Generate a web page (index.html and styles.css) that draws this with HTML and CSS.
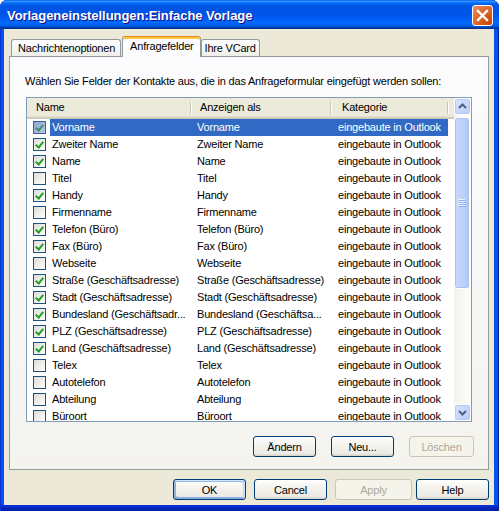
FILE: index.html
```html
<!DOCTYPE html>
<html lang="de">
<head>
<meta charset="utf-8">
<title>Vorlageneinstellungen</title>
<link rel="stylesheet" href="styles.css">
</head>
<body>
<div class="window">
  <div class="titlebar">
    <span class="title">Vorlageneinstellungen:Einfache Vorlage</span>
    <span class="close">
      <svg width="21" height="21" viewBox="0 0 21 21"><path d="M6 6 L15 15 M15 6 L6 15" stroke="#fff" stroke-width="2.4" stroke-linecap="square"/></svg>
    </span>
  </div>
  <div class="client">
    <div class="tabs">
      <div class="tab">Nachrichtenoptionen</div>
      <div class="tab active">Anfragefelder</div>
      <div class="tab">Ihre VCard</div>
    </div>
    <div class="panel">
      <div class="label">Wählen Sie Felder der Kontakte aus, die in das Anfrageformular eingefügt werden sollen:</div>
      <div class="list">
        <div class="list-main">
          <div class="header">
            <div class="hcell c1">Name</div>
            <div class="hcell c2">Anzeigen als</div>
            <div class="hcell c3">Kategorie</div>
          </div>
          <div class="rows">
            <div class="row selected"><div class="cell c1"><span class="cb on"></span><span class="txt">Vorname</span></div><div class="cell c2">Vorname</div><div class="cell c3">eingebaute in Outlook</div></div>
            <div class="row"><div class="cell c1"><span class="cb on"></span><span class="txt">Zweiter Name</span></div><div class="cell c2">Zweiter Name</div><div class="cell c3">eingebaute in Outlook</div></div>
            <div class="row"><div class="cell c1"><span class="cb on"></span><span class="txt">Name</span></div><div class="cell c2">Name</div><div class="cell c3">eingebaute in Outlook</div></div>
            <div class="row"><div class="cell c1"><span class="cb"></span><span class="txt">Titel</span></div><div class="cell c2">Titel</div><div class="cell c3">eingebaute in Outlook</div></div>
            <div class="row"><div class="cell c1"><span class="cb on"></span><span class="txt">Handy</span></div><div class="cell c2">Handy</div><div class="cell c3">eingebaute in Outlook</div></div>
            <div class="row"><div class="cell c1"><span class="cb"></span><span class="txt">Firmenname</span></div><div class="cell c2">Firmenname</div><div class="cell c3">eingebaute in Outlook</div></div>
            <div class="row"><div class="cell c1"><span class="cb on"></span><span class="txt">Telefon (Büro)</span></div><div class="cell c2">Telefon (Büro)</div><div class="cell c3">eingebaute in Outlook</div></div>
            <div class="row"><div class="cell c1"><span class="cb on"></span><span class="txt">Fax (Büro)</span></div><div class="cell c2">Fax (Büro)</div><div class="cell c3">eingebaute in Outlook</div></div>
            <div class="row"><div class="cell c1"><span class="cb"></span><span class="txt">Webseite</span></div><div class="cell c2">Webseite</div><div class="cell c3">eingebaute in Outlook</div></div>
            <div class="row"><div class="cell c1"><span class="cb on"></span><span class="txt">Straße (Geschäftsadresse)</span></div><div class="cell c2">Straße (Geschäftsadresse)</div><div class="cell c3">eingebaute in Outlook</div></div>
            <div class="row"><div class="cell c1"><span class="cb on"></span><span class="txt">Stadt (Geschäftsadresse)</span></div><div class="cell c2">Stadt (Geschäftsadresse)</div><div class="cell c3">eingebaute in Outlook</div></div>
            <div class="row"><div class="cell c1"><span class="cb on"></span><span class="txt">Bundesland (Geschäftsadr...</span></div><div class="cell c2">Bundesland (Geschäftsa...</div><div class="cell c3">eingebaute in Outlook</div></div>
            <div class="row"><div class="cell c1"><span class="cb on"></span><span class="txt">PLZ (Geschäftsadresse)</span></div><div class="cell c2">PLZ (Geschäftsadresse)</div><div class="cell c3">eingebaute in Outlook</div></div>
            <div class="row"><div class="cell c1"><span class="cb on"></span><span class="txt">Land (Geschäftsadresse)</span></div><div class="cell c2">Land (Geschäftsadresse)</div><div class="cell c3">eingebaute in Outlook</div></div>
            <div class="row"><div class="cell c1"><span class="cb"></span><span class="txt">Telex</span></div><div class="cell c2">Telex</div><div class="cell c3">eingebaute in Outlook</div></div>
            <div class="row"><div class="cell c1"><span class="cb"></span><span class="txt">Autotelefon</span></div><div class="cell c2">Autotelefon</div><div class="cell c3">eingebaute in Outlook</div></div>
            <div class="row"><div class="cell c1"><span class="cb"></span><span class="txt">Abteilung</span></div><div class="cell c2">Abteilung</div><div class="cell c3">eingebaute in Outlook</div></div>
            <div class="row"><div class="cell c1"><span class="cb"></span><span class="txt">Büroort</span></div><div class="cell c2">Büroort</div><div class="cell c3">eingebaute in Outlook</div></div>
          </div>
        </div>
        <div class="scrollbar">
          <div class="sbtn">
            <svg width="15" height="15" viewBox="0 0 15 15"><path d="M4 9 L7.5 5.5 L11 9" fill="none" stroke="#4D6185" stroke-width="2"/></svg>
          </div>
          <div class="track">
            <div class="thumb">
              <svg width="8" height="8" viewBox="0 0 8 8"><path d="M0 0.5 H7 M0 2.5 H7 M0 4.5 H7 M0 6.5 H7" stroke="#EEF4FE" stroke-width="1"/><path d="M1 1.5 H8 M1 3.5 H8 M1 5.5 H8 M1 7.5 H8" stroke="#8CB0F8" stroke-width="1"/></svg>
            </div>
          </div>
          <div class="sbtn">
            <svg width="15" height="15" viewBox="0 0 15 15"><path d="M4 6 L7.5 9.5 L11 6" fill="none" stroke="#4D6185" stroke-width="2"/></svg>
          </div>
        </div>
      </div>
      <div class="panel-buttons">
        <button class="btn small">Ändern</button>
        <button class="btn small">Neu...</button>
        <button class="btn small disabled">Löschen</button>
      </div>
    </div>
    <div class="dialog-buttons">
      <button class="btn default">OK</button>
      <button class="btn">Cancel</button>
      <button class="btn disabled wide">Apply</button>
      <button class="btn">Help</button>
    </div>
  </div>
</div>
</body>
</html>
```

FILE: styles.css
```css
* { box-sizing: border-box; }
html, body { margin: 0; padding: 0; background: #fff; }
body { font-family: "Liberation Sans", Arial, sans-serif; font-size: 11px; letter-spacing: -0.2px; color: #000; }

.window {
  width: 499px;
  height: 511px;
  display: flex;
  flex-direction: column;
  border-radius: 7px 7px 0 0;
  background: linear-gradient(to bottom, #0454E6 calc(100% - 6px), #0831D9 calc(100% - 6px), #001EA0 100%);
  box-shadow: inset 1px 0 #0831D9, inset -1px 0 #001EA0;
  overflow: hidden;
}

.titlebar {
  height: 29px;
  flex: none;
  display: flex;
  align-items: center;
  justify-content: space-between;
  padding: 0 6px 0 7px;
  border-radius: 7px 7px 0 0;
  background: linear-gradient(to bottom, #0058EE 0%, #3593FF 4%, #288EFF 6%, #127DFF 8%, #036FFC 10%, #0262EE 14%, #0057E5 20%, #0054E3 24%, #0055EB 56%, #005BF5 66%, #026AFE 76%, #0062EF 86%, #0052D6 92%, #0040AB 94%, #003092 100%);
}
.title {
  color: #fff;
  font-weight: bold;
  font-size: 13px;
  letter-spacing: -0.05px;
  text-shadow: 1px 1px #0F1089;
  padding-top: 2px;
}
.close {
  width: 21px;
  height: 21px;
  display: flex;
  border: 1px solid #fff;
  border-radius: 3px;
  background: radial-gradient(circle at 90% 90%, #CC4600 0%, #DC6527 55%, #E8936D 100%);
  margin-top: 1px;
}
.close svg { margin: -1px; }

.client {
  flex: 1;
  margin: 0 5px 6px 4px;
  background: #ECE9D8;
  display: flex;
  flex-direction: column;
}

.tabs {
  display: flex;
  align-items: flex-end;
  height: 20px;
  margin-top: 7px;
  padding-left: 7px;
  position: relative;
  z-index: 1;
}
.tab {
  height: 17px;
  line-height: 16px;
  padding: 0 5px 0 6px;
  border: 1px solid #919B9C;
  border-bottom: none;
  border-radius: 3px 3px 0 0;
  background: linear-gradient(to bottom, #FFFFFF, #FAFAF9 26%, #F0F0EA 95%, #ECEBE6);
  white-space: nowrap;
}
.tab.active {
  height: 21px;
  margin-bottom: -1px;
  margin-left: 1px;
  padding: 0 6px 0 7px;
  line-height: 18px;
  background: #FCFCFE;
  border-top: 1px solid #E68B2C;
  box-shadow: inset 0 2px #FFC73C;
}
.tab.active + .tab { padding: 0 3px 0 3px; }

.panel {
  height: 414px;
  margin-left: 5px;
  width: 480px;
  border: 1px solid #919B9C;
  background: linear-gradient(to bottom, #FCFCFE, #F4F3EE);
  display: flex;
  flex-direction: column;
}

.label {
  margin: 17px 0 0 15px;
  line-height: 14px;
  white-space: nowrap;
}

.list {
  margin: 9px 0 0 16px;
  width: 446px;
  height: 325px;
  border: 1px solid #7F9DB9;
  background: #fff;
  display: flex;
  overflow: hidden;
}
.list-main {
  flex: 1;
  display: flex;
  flex-direction: column;
  overflow: hidden;
}
.header {
  display: flex;
  height: 21px;
  flex: none;
  background: #EBEADB;
  box-shadow: inset 0 -1px #CBC7B8, inset 0 -2px #D6D2C2, inset 0 -3px #E2DECD;
}
.hcell {
  position: relative;
  line-height: 19px;
  white-space: nowrap;
  padding-left: 9px;
}
.hcell::after {
  content: "";
  position: absolute;
  right: 0;
  top: 4px;
  height: 12px;
  width: 1px;
  background: #C7C5B2;
  box-shadow: 1px 0 #fff;
}
.hcell.c3 { padding-left: 11px; }

.c1 { width: 164px; flex: none; }
.c2 { width: 140px; flex: none; }
.c3 { width: 117px; flex: none; }

.rows { display: flex; flex-direction: column; }
.row { display: flex; height: 17px; flex: none; }
.cell {
  line-height: 17px;
  white-space: nowrap;
  overflow: hidden;
}
.cell.c1 { display: flex; align-items: center; padding-left: 6px; }
.cell.c2 { padding-left: 6px; }
.cell.c3 { padding-left: 7px; }
.txt {
  flex: 1;
  padding-left: 2px;
  margin-left: 4px;
  line-height: 17px;
  overflow: hidden;
}
.row.selected .txt,
.row.selected .c2,
.row.selected .c3 { background: #316AC5; color: #fff; }

.cb {
  width: 13px;
  height: 13px;
  flex: none;
  border: 1px solid #1C5180;
  background: linear-gradient(135deg, #DCDCD7, #FFFFFF);
  position: relative;
}
.cb.on::after {
  content: "";
  position: absolute;
  left: 2px;
  top: 0px;
  width: 3px;
  height: 6px;
  border-right: 2px solid #21A121;
  border-bottom: 2px solid #21A121;
  transform: translate(1px, 1px) rotate(40deg);
  transform-origin: center;
}
.row.selected .cb {
  background: linear-gradient(135deg, #8FA6D6, #B7C6E8);
  border-color: #3E5F9A;
}
.row.selected .cb.on::after { border-color: #3A9161; }

.scrollbar {
  width: 17px;
  flex: none;
  display: flex;
  flex-direction: column;
  background: linear-gradient(to right, #F3F1EC, #FEFEFB);
}
.sbtn {
  width: 17px;
  height: 17px;
  flex: none;
  border: 1px solid #fff;
  border-radius: 3px;
  background: linear-gradient(135deg, #D8E3FD, #B9CCF9);
  box-shadow: inset 0 0 0 1px #B4C8F6;
  display: flex;
}
.track {
  flex: 1;
  padding: 2px 0 0 0;
}
.thumb {
  height: 172px;
  width: 16px;
  border: 1px solid #fff;
  border-radius: 3px;
  background: linear-gradient(to right, #C9D8FC, #BCD0FA 60%, #B0C6F8);
  box-shadow: inset 0 0 0 1px #A9C0F2;
  display: flex;
  align-items: center;
  justify-content: center;
}

.panel-buttons {
  display: flex;
  justify-content: flex-end;
  gap: 15px;
  margin: 14px 14px 0 0;
}
.btn {
  font-family: "Liberation Sans", Arial, sans-serif;
  font-size: 11px;
  letter-spacing: -0.2px;
  color: #000;
  height: 21px;
  width: 73px;
  padding: 0;
  border: 1px solid #003C74;
  border-radius: 3px;
  background: linear-gradient(to bottom, #FFFFFF 0%, #F4F3EE 40%, #ECEBE6 86%, #D6D0C5 100%);
}
.btn.wide { width: 77px; }
.btn.small { width: 63px; }
.btn.small.disabled { width: 65px; }
.btn.disabled {
  color: #ACA899;
  border-color: #C9C7BA;
  background: #F5F4EA;
}
.btn.default {
  box-shadow: inset -1px 1px #CEE7FF, inset 1px 2px #98B8EA, inset -2px 2px #BCD4F6, inset 1px -1px #89ADE4, inset 2px -2px #89ADE4;
}

.dialog-buttons {
  display: flex;
  justify-content: flex-end;
  gap: 8px;
  margin: 9px 5px 0 0;
}
.dialog-buttons .btn:last-child { margin-left: -4px; }
```
